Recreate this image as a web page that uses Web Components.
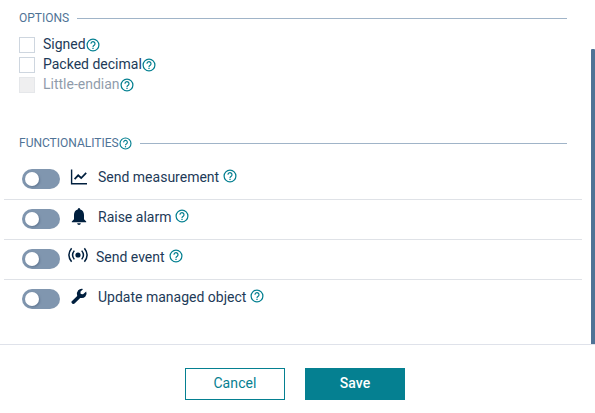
<!DOCTYPE html>
<html lang="en"><head><meta charset="utf-8"><title>Options</title>
<style>
html,body{margin:0;height:100%;overflow:hidden;background:#fff;font:14px/20px Roboto,"Liberation Sans",sans-serif;color:#1d3a58}
</style></head><body>
<options-dialog></options-dialog>
<script>
function define(name, html, setup) {
  const t = document.createElement('template');
  t.innerHTML = html;
  customElements.define(name, class extends HTMLElement {
    constructor() {
      super();
      this.attachShadow({mode: 'open'}).append(t.content.cloneNode(true));
    }
    connectedCallback() { if (setup) setup(this, this.shadowRoot); }
  });
}

define('help-icon', `<style>
:host{display:block;flex:none;width:14px;height:14px}
svg{display:block;width:100%;height:100%}
</style><svg viewBox="0 0 14 14" fill="none" stroke="#058091"><circle cx="7" cy="7" r="5.9" stroke-width="1.25"/><path d="M5 5.8a2 2 0 1 1 3.3 1.4C7.4 7.8 7 8 7 9" stroke-width="1.2"/><path d="M7 9.8v1.3" stroke-width="1.3"/></svg>`);

const icons = {
  chart: '<path d="M1.6 .5v14.3H17" fill="none" stroke="#001f3e" stroke-width="1.4"/><path d="M4.6 10.2 8.2 6.3l3 2.7 5-5.2" fill="none" stroke="#001f3e" stroke-width="1.7"/>',
  bell: '<path d="M9 0q1.3 0 1.3 1.5C12.9 2.2 14 4.4 14 7v4.3l2.2 2.2v.8H1.8v-.8L4 11.3V7c0-2.6 1.1-4.8 3.7-5.5Q7.7 0 9 0zM7.1 15.2h3.8Q10.7 17 9 17t-1.9-1.8z"/>',
  event: '<circle cx="10" cy="8" r="2.6"/><g fill="none" stroke="#001f3e" stroke-width="1.5"><path d="M6.3 3.6q-3.5 4.4 0 8.800M13.7 3.6q3.5 4.4 0 8.8M3.6 1.2q-5.4 6.8 0 13.6M16.4 1.2q5.4 6.8 0 13.6"/></g>',
  wrench: '<path d="M1.5 13.4 7.2 8Q6.2 4.500 8.200 2.300 10.300.2 13.100 1L10.400 3.700l.3 2.200 2.300.4 3.200-2.900q1.200 3-.8 5.200-2 2.100-5.200 1.300l-5.600 5.700q-1.200 1-2.400-.1t-.7-2.100z"/>'
};
define('feature-icon', `<style>
:host{display:block;flex:none;width:18px;height:17px}
:host([name=event]){width:20px;height:16px}
svg{display:block;width:100%;height:100%;fill:#001f3e}
</style><svg></svg>`, (h, r) => {
  const s = r.querySelector('svg'), n = h.getAttribute('name');
  s.setAttribute('viewBox', n === 'event' ? '0 0 20 16' : '0 0 18 17');
  s.innerHTML = icons[n];
});

define('section-heading', `<style>
:host{display:flex;align-items:center;height:20px;font-size:12px;color:#4f7396}
.line{flex:1;height:1px;margin-left:8px;background:#a0b4c8}
</style><slot></slot><slot name="help"></slot><span class="line"></span>`);

define('check-option', `<style>
:host{display:flex;align-items:center;height:20px}
.box{box-sizing:border-box;width:16px;height:16px;border:1px solid #ced6df;margin-right:8px}
.label{margin-top:-2px}
:host([disabled]) .label{opacity:.5}
:host([disabled]) .box{background:#efeff0;border-color:#e5e7ea}
</style><span class="box"></span><span class="label"><slot></slot></span><help-icon></help-icon>`);

define('toggle-switch', `<style>
:host{display:block;flex:none;box-sizing:border-box;width:38px;height:20px;padding:3px;border-radius:10px;background:#8096af}
.knob{display:block;width:14px;height:14px;border-radius:50%;background:#fff;box-shadow:1px 1px 2px #40587580}
</style><span class="knob"></span>`);

define('feature-row', `<style>
:host{display:flex;box-sizing:border-box;height:40px;border-bottom:1px solid #dfe2e7;padding:9px 0 0 18px;align-items:flex-start}
:host([last]){border:0}
feature-icon{margin:0 10px 0 10px}
:host([icon=event]) feature-icon{margin:-2px 8px 0 8px}
:host([icon=bell]) feature-icon,:host([icon=wrench]) feature-icon{margin-top:-1px}
.label{margin-top:-2px}
help-icon{margin:0 0 0 4px}
</style><toggle-switch></toggle-switch><feature-icon></feature-icon><span class="label"><slot></slot></span><help-icon></help-icon>`,
(h, r) => {
  const old = r.querySelector('feature-icon'), el = document.createElement('feature-icon');
  el.setAttribute('name', h.getAttribute('icon'));
  old.replaceWith(el);
});

define('action-button', `<style>
:host{display:block;box-sizing:border-box;width:100px;height:32px;border:1px solid #058091;color:#058091;text-align:center;line-height:29px;font-weight:400;letter-spacing:.1px}
:host([primary]){background:#058091;color:#fff;font-weight:500}
</style><slot></slot>`);

define('options-dialog', `<style>
:host{display:flex;flex-direction:column;height:413px}
.body{display:flex;height:344px}
.content{flex:1}
.options{padding:8px 24px 0 19px}
.checks{padding:7px 0 0}
.func{padding:38px 24px 0 19px}
.list{padding:7px 9px 0 4px}
.track{width:4px;padding-top:49px}
.thumb{height:295px;background:#4f7396;border-radius:1px 1px 0 0}
footer{display:flex;padding-left:185px;gap:20px;border-top:1px solid #dfe2ea;padding-top:23px}
</style>
<div class="body"><div class="content">
<div class="options"><section-heading>OPTIONS</section-heading>
<div class="checks"><check-option>Signed</check-option><check-option>Packed decimal</check-option><check-option disabled>Little-endian</check-option></div></div>
<div class="func"><section-heading>FUNCTIONALITIES<help-icon slot="help" style="width:13px;height:13px;margin-top:1px"></help-icon></section-heading></div>
<div class="list"><feature-row icon="chart">Send measurement</feature-row><feature-row icon="bell">Raise alarm</feature-row><feature-row icon="event">Send event</feature-row><feature-row icon="wrench" last>Update managed object</feature-row></div>
</div><div class="track"><div class="thumb"></div></div></div>
<footer><action-button>Cancel</action-button><action-button primary>Save</action-button></footer>`);
</script></body></html>
